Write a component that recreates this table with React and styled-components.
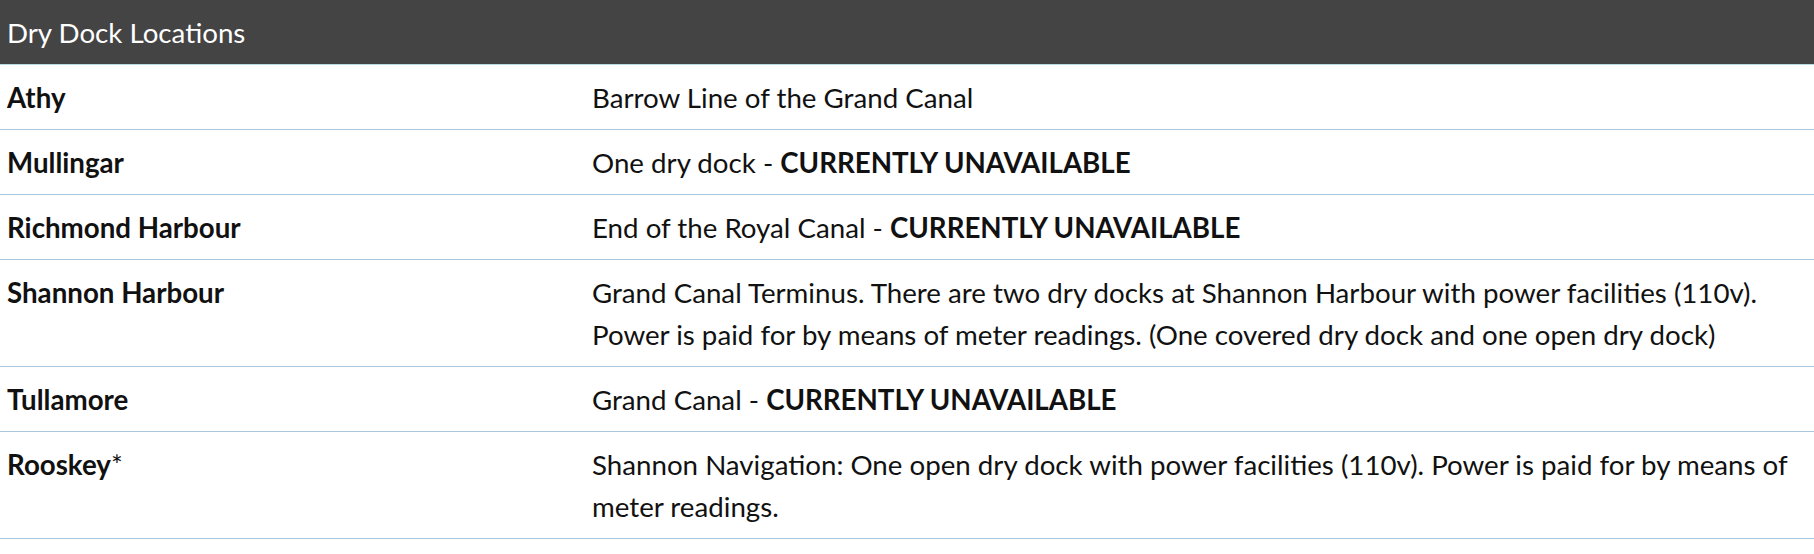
import React from 'react';
import styled, { createGlobalStyle } from 'styled-components';

const GlobalStyle = createGlobalStyle`
    html, body { margin: 0; padding: 0; background: #ffffff; }
    body { font-family: Lato, "Open Sans", "Liberation Sans", sans-serif; color: #111111; }
`;

// --- Styled Components ---
const Table = styled.table`
    width: 100%; border-collapse: collapse; font-size: 27.7px; line-height: 42px;
`;
const HeadCell = styled.th`
    background: #444444; color: #ffffff; font-weight: 400; text-align: left;
    padding: 12px 7px 10px; border-bottom: 1px solid #b9dbe6;
`;
const Row = styled.tr`
    border-bottom: 1px solid #a9c6dc;
`;
const NameCell = styled.td`
    width: 571px; padding: 12px 7px 10px; vertical-align: top; font-weight: 700;
`;
const InfoCell = styled.td`
    padding: 12px 7px 10px; vertical-align: top;
`;
const Note = styled.span`
    font-weight: 400;
`;

const docks = [
    { name: 'Athy', info: 'Barrow Line of the Grand Canal' },
    { name: 'Mullingar', info: 'One dry dock - ', closed: true },
    { name: 'Richmond Harbour', info: 'End of the Royal Canal - ', closed: true },
    {
        name: 'Shannon Harbour',
        info: 'Grand Canal Terminus. There are two dry docks at Shannon Harbour with power facilities (110v). Power is paid for by means of meter readings. (One covered dry dock and one open dry dock)',
    },
    { name: 'Tullamore', info: 'Grand Canal - ', closed: true },
    {
        name: 'Rooskey',
        mark: '*',
        info: 'Shannon Navigation: One open dry dock with power facilities (110v). Power is paid for by means of meter readings.',
    },
];

const App = () => (
    <>
        <GlobalStyle />
        <Table>
            <thead>
                <tr>
                    <HeadCell colSpan={2}>Dry Dock Locations</HeadCell>
                </tr>
            </thead>
            <tbody>
                {docks.map((dock) => (
                    <Row key={dock.name}>
                        <NameCell>
                            {dock.name}
                            {dock.mark && <Note>{dock.mark}</Note>}
                        </NameCell>
                        <InfoCell>
                            {dock.info}
                            {dock.closed && <strong>CURRENTLY UNAVAILABLE</strong>}
                        </InfoCell>
                    </Row>
                ))}
            </tbody>
        </Table>
    </>
);

export default App;
